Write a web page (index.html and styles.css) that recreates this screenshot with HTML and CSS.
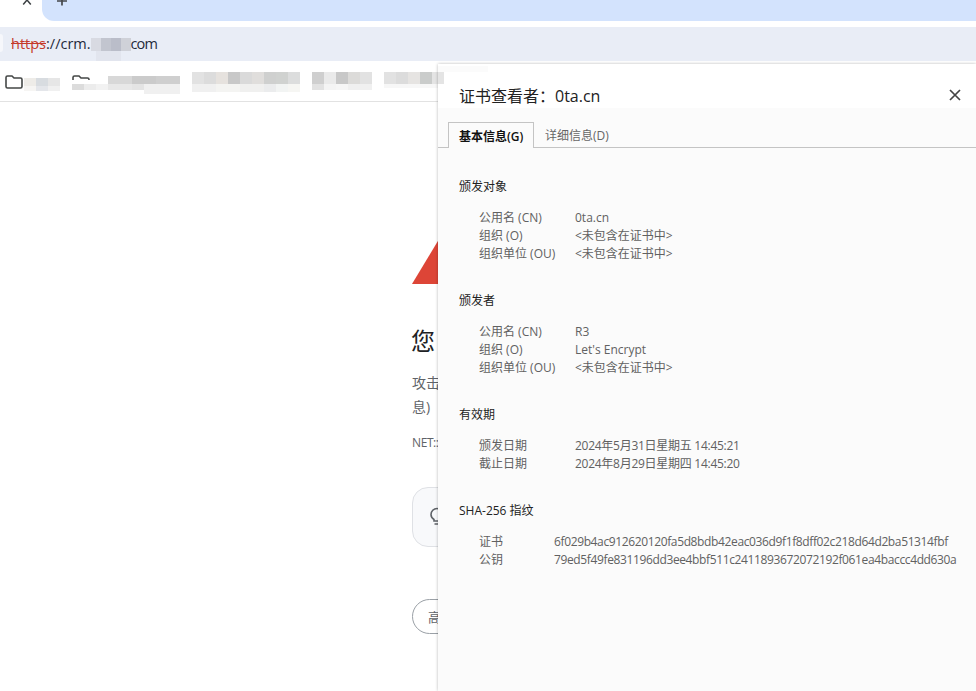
FILE: index.html
```html
<!DOCTYPE html>
<html lang="zh-CN">
<head>
<meta charset="utf-8">
<title>证书查看者</title>
<link rel="stylesheet" href="styles.css">
</head>
<body>
<div class="tabstrip">
  <div class="tab-active"><svg class="tab-x" width="10" height="6" viewBox="0 0 10 6"><path d="M5 0 1.200 4.500M5 0 8.800 4.500" stroke="#3c4043" stroke-width="1.500" fill="none"/></svg></div>
  <div class="tab-rest"><svg class="tab-plus" width="12" height="6" viewBox="0 0 12 6"><path d="M6 0V5.500M1 1H11" stroke="#45484b" stroke-width="1.700" fill="none"/></svg></div>
</div>
<div class="addressbar">
  <span class="scheme">https</span><span class="url">://crm.</span><span class="url-blur"></span><span class="url url-tail">com</span>
</div>
<div class="bookmarks">
  <svg class="folder" width="18" height="14" viewBox="0 0 18 14"><path d="M1 2.500A1.500 1.500 0 0 1 2.500 1H7L9 3H15.500A1.500 1.500 0 0 1 17 4.500V11.500A1.500 1.500 0 0 1 15.500 13H2.500A1.500 1.500 0 0 1 1 11.500Z" fill="none" stroke="#444746" stroke-width="1.600"/></svg>
  <div class="mosaic m1"></div>
  <svg class="folder folder2" width="18" height="14" viewBox="0 0 18 14"><path d="M1 2.500A1.500 1.500 0 0 1 2.500 1H7L9 3H15.500A1.500 1.500 0 0 1 17 4.500V11.500A1.500 1.500 0 0 1 15.500 13H2.500A1.500 1.500 0 0 1 1 11.500Z" fill="none" stroke="#444746" stroke-width="1.600"/></svg>
  <div class="mosaic m2"></div>
  <div class="mosaic m3"></div>
  <div class="mosaic m4"></div>
  <div class="mosaic m5"></div>
</div>
<main class="page">
  <div class="warn-triangle"></div>
  <h1 class="page-title">您</h1>
  <p class="page-text">攻击<br>息)</p>
  <p class="page-code">NET::</p>
  <div class="tip-box">
    <svg class="bulb" width="16" height="20" viewBox="0 0 16 20"><path d="M5 13.500C3 12.200 2 10.500 2 8.500A6 6 0 0 1 14 8.500C14 10.500 13 12.200 11 13.500V15H5ZM5.500 18H10.500" fill="none" stroke="#5f6368" stroke-width="1.600"/></svg>
  </div>
  <button class="adv-btn">高</button>
</main>
<aside class="viewer">
  <div class="smudge-a"></div>
  <div class="smudge-b"></div>
  <header class="viewer-head">
    <span class="viewer-title">证书查看者：0ta.cn</span>
    <svg class="close" width="12" height="12" viewBox="0 0 12 12"><path d="M1 1 11 11M11 1 1 11" stroke="#444" stroke-width="1.700" fill="none"/></svg>
  </header>
  <div class="viewer-body">
    <nav class="tabs">
      <span class="tab tab-on">基本信息(G)</span>
      <span class="tab">详细信息(D)</span>
    </nav>
    <div class="sections">
      <section class="sec">
        <h2 class="sec-title">颁发对象</h2>
        <div class="rows">
          <span>公用名 (CN)</span><span>0ta.cn</span>
          <span>组织 (O)</span><span>&lt;未包含在证书中&gt;</span>
          <span>组织单位 (OU)</span><span>&lt;未包含在证书中&gt;</span>
        </div>
      </section>
      <section class="sec">
        <h2 class="sec-title">颁发者</h2>
        <div class="rows">
          <span>公用名 (CN)</span><span>R3</span>
          <span>组织 (O)</span><span>Let's Encrypt</span>
          <span>组织单位 (OU)</span><span>&lt;未包含在证书中&gt;</span>
        </div>
      </section>
      <section class="sec sec-short">
        <h2 class="sec-title">有效期</h2>
        <div class="rows">
          <span>颁发日期</span><span class="date">2024年5月31日星期五 14:45:21</span>
          <span>截止日期</span><span class="date">2024年8月29日星期四 14:45:20</span>
        </div>
      </section>
      <section class="sec">
        <h2 class="sec-title">SHA-256 指纹</h2>
        <div class="rows rows-hash">
          <span>证书</span><span class="hash">6f029b4ac912620120fa5d8bdb42eac036d9f1f8dff02c218d64d2ba51314fbf</span>
          <span>公钥</span><span class="hash">79ed5f49fe831196dd3ee4bbf511c2411893672072192f061ea4baccc4dd630a</span>
        </div>
      </section>
    </div>
  </div>
</aside>
</body>
</html>
```
FILE: styles.css
```css
* { box-sizing: border-box; }
html, body { margin: 0; height: 100%; overflow: hidden; }
body {
  background: #fff;
  color: #202124;
  font-family: "Open Sans", "Noto Sans CJK SC", sans-serif;
  position: relative;
}
.tabstrip { display: flex; height: 27px; }
.tab-active { width: 42px; height: 21px; position: relative; }
.tab-x { position: absolute; left: 21.500px; top: 0; }
.tab-rest {
  flex: 1;
  height: 21px;
  background: #d3e3fd;
  border-bottom-left-radius: 12px;
  position: relative;
}
.tab-plus { position: absolute; left: 14px; top: 0; }
.addressbar {
  height: 34px;
  background: #e9edf6;
  display: flex;
  align-items: center;
  padding-bottom: 2px;
  font-size: 14.500px;
  color: #1f2a3a;
}
.addressbar::before {
  content: "";
  width: 3px;
  height: 18px;
  margin-right: 8px;
  background: #f6f7fb;
  border-radius: 0 9px 9px 0;
}
.scheme { color: #c5392a; text-decoration: line-through; }
.url-tail { letter-spacing: -0.900px; }
.url-blur {
  width: 40px;
  height: 24px;
  margin-top: 14px;
  background:
    linear-gradient(90deg, #d8dae2 10px, #c2c5cf 10px 20px, #babdc9 20px 30px, #cfd1d8 30px) 0 0 / 100% 13px no-repeat,
    linear-gradient(#e2e5ee, #e2e5ee) 5px 13px / 25px 10px no-repeat;
}
.bookmarks {
  height: 41px;
  border-bottom: 1px solid #e2e2e2;
  display: flex;
  align-items: flex-start;
  padding-left: 5px;
}
.folder { flex: none; margin-top: 14px; }
.folder2 { margin-left: 12px; margin-right: -18px; }
.mosaic { flex: none; position: relative; }
.m1 {
  width: 36px; height: 13px; margin: 17px 0 0 1px;
  background:
    linear-gradient(90deg, #eeece8 12px, #d8dce0 12px 24px, #e6e6e6 24px) 0 0 / 100% 8px no-repeat,
    linear-gradient(90deg, #f6f5f3 12px, #e4e6ea 12px 24px, #f0f0f0 24px) 0 8px / 100% 5px no-repeat;
}
.m2 {
  width: 108px; height: 18px; margin: 15px 0 0;
  background:
    linear-gradient(90deg, #fff 36px, #d8d8d8 36px 60px, #cbcbcb 60px 84px, #cfcfcf 84px) 0 4px / 100% 4px no-repeat,
    linear-gradient(90deg, transparent 36px, #d8d8d8 36px 60px, #cbcbcb 60px 84px, #cfcfcf 84px) 0 0 / 100% 4px no-repeat,
    linear-gradient(90deg, #dcdcdc 12px, #ececec 12px 24px, #f2f2f2 24px 36px, #e8e8e8 36px 60px, #e4e4e4 60px 72px, #f0f0f0 72px) 0 8px / 100% 6px no-repeat,
    linear-gradient(#f0f0f0, #f0f0f0) 72px 14px / 36px 4px no-repeat;
}
.m3 {
  width: 108px; height: 20px; margin: 11px 0 0 12px;
  background:
    linear-gradient(90deg, #e2e2e2 12px, #dcdcdc 12px 24px, #e6e2de 24px 36px, #c8c8c8 36px 48px, #dadada 48px 60px, #e0dedc 60px 72px, #cfd0cf 72px 84px, #d0d2d0 84px 96px, #dcdddd 96px) 0 0 / 100% 12px no-repeat,
    linear-gradient(90deg, #f0f0f0 24px, #f4f4f2 24px 48px, #f0f0ef 48px 72px, #ebeced 72px 84px, #f2f4f3 84px 96px, #f6f6f3 96px) 0 12px / 100% 8px no-repeat;
}
.m4 {
  width: 60px; height: 18px; margin: 11px 0 0 12px;
  background:
    linear-gradient(90deg, #cfcfcf 12px, #eaeaea 12px 24px, #c8c8c8 24px 36px, #dcdbd9 36px 48px, #e2e2e2 48px) 0 0 / 100% 12px no-repeat,
    linear-gradient(90deg, #e2e2e2 12px, #f4f4f4 12px 24px, #f6f6f6 24px 36px, #f0f0f0 36px) 0 12px / 100% 6px no-repeat;
}
.m5 {
  width: 60px; height: 16px; margin: 11px 0 0 12px;
  background:
    linear-gradient(90deg, #e2e2e2 12px, #dcdcdc 12px 24px, #e6e4e2 24px 36px, #cacccb 36px 48px, #e4e4e4 48px) 0 0 / 100% 12px no-repeat,
    linear-gradient(#f7f7f7, #f7f7f7) 0 12px / 100% 4px no-repeat;
}
.page { padding: 109px 0 0 412px; white-space: nowrap; }
.warn-triangle {
  width: 0; height: 0;
  border-left: 44px solid transparent;
  border-right: 44px solid transparent;
  border-bottom: 73px solid #dd4537;
}
.page-title { margin: 39px 0 0 -1px; font-size: 24px; font-weight: 400; line-height: 36px; color: #202124; }
.page-text { margin: 12px 0 0; font-size: 14px; line-height: 24px; color: #5f6368; }
.page-code { margin: 16px 0 0; font-size: 12px; line-height: 16px; letter-spacing: -0.400px; color: #5f6368; }
.tip-box {
  width: 300px; height: 60px; margin-top: 36px;
  background: #f8f9fb;
  border: 1px solid #dfe1e5;
  border-radius: 16px;
  padding: 18px 0 0 16px;
}
.bulb { display: block; }
.adv-btn {
  display: block;
  width: 100px; height: 35px; margin-top: 52px;
  background: #fff;
  border: 1px solid #9aa0a6;
  border-radius: 18px;
  font: 13px "Noto Sans CJK SC", sans-serif;
  color: #5f6368;
  text-align: left;
  padding-left: 15px;
}
.viewer {
  position: absolute;
  left: 438px; top: 64px; right: 0; bottom: 0;
  background: #fbfbfb;
  box-shadow: 0 0 3px rgba(0,0,0,.28);
  display: flex;
  flex-direction: column;
}
.smudge-a {
  position: absolute;
  left: 0; top: 8px;
  width: 6px; height: 12px;
  background: #e4e4e4;
}
.smudge-b {
  position: absolute;
  left: 0; top: 2px;
  width: 50px; height: 6px;
  background: #fbfbfb;
}
.viewer-head {
  height: 44px;
  background: #fff;
  display: flex;
  align-items: center;
  justify-content: space-between;
  padding: 20px 15px 0 21px;
}
.viewer-title { font-size: 16px; color: #222; line-height: 24px; }
.close { margin-bottom: 2px; }
.viewer-body { flex: 1; }
.tabs {
  display: flex;
  height: 26px; margin-top: 14px;
  padding-left: 10px;
  border-bottom: 1px solid #c4c4c4;
  font-size: 12px;
}
.tab { height: 26px; line-height: 27px; padding: 0 11px; color: #666; white-space: nowrap; }
.tab-on {
  width: 86px;
  color: #111;
  font-weight: 600;
  background: #fbfbfb;
  border: 1px solid #c4c4c4;
  border-bottom: 0;
  padding-left: 10px;
}
.sections { padding: 30px 0 0 21px; }
.sec { height: 114px; }
.sec-short { height: 96px; }
.sec-title { margin: 0; font-size: 12px; font-weight: 400; line-height: 18px; color: #222; }
.rows {
  display: grid;
  grid-template-columns: 96px 1fr;
  margin: 13px 0 0 20px;
  font-size: 12px;
  line-height: 18px;
  color: #616161;
  white-space: nowrap;
}
.rows-hash { grid-template-columns: 75px 1fr; }
.date { letter-spacing: -0.270px; }
.hash { letter-spacing: -0.370px; }
```
